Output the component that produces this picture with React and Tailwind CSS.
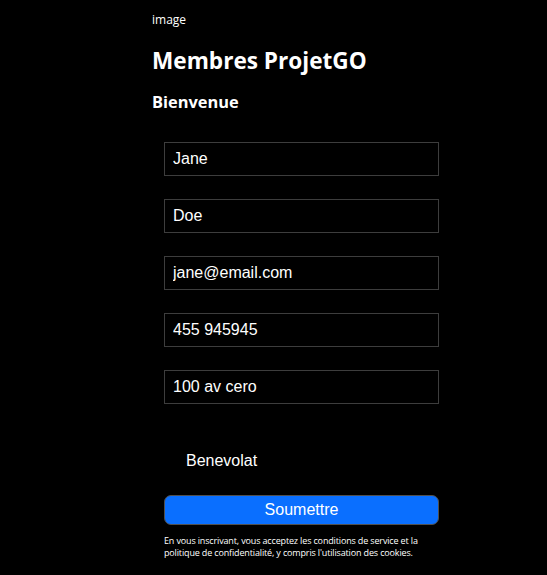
const FIELDS = ["Jane", "Doe", "jane@email.com", "455 945945", "100 av cero"];

export default function App() {
  return (
    <div className="min-h-[575px] bg-black text-white pl-[152px] pt-[12px]">
      <p className="text-[12px] leading-[16px] font-['Open_Sans',sans-serif]">image</p>
      <h1 className="mt-[19px] text-[22.6px] leading-[28px] font-bold font-['Open_Sans',sans-serif]">
        Membres ProjetGO
      </h1>
      <h2 className="mt-[16px] text-[16.4px] leading-[22px] font-bold font-['Open_Sans',sans-serif]">
        Bienvenue
      </h2>

      <form className="ml-[12px] mt-[29px] w-[275px] flex flex-col font-['Liberation_Sans',Arial,sans-serif]">
        <div className="flex flex-col gap-[23px]">
          {FIELDS.map((v) => (
            <input
              key={v}
              defaultValue={v}
              className="h-[34px] w-full bg-black border border-[#3d3d3d] px-[8px] text-[16px] text-white outline-none"
            />
          ))}
        </div>

        <label className="mt-[47px] flex items-center gap-[6px] text-[16px] leading-[20px]">
          <span className="w-[16px] h-[16px]" />
          Benevolat
        </label>

        <button
          type="button"
          className="mt-[24px] h-[30px] w-full rounded-[7px] bg-[#0a6fff] border border-[#505050] text-[16px] text-white"
        >
          Soumettre
        </button>

        <p className="mt-[10px] text-[9px] leading-[11.5px] tracking-[-0.15px] font-['Open_Sans',sans-serif]">
          En vous inscrivant, vous acceptez les conditions de service et la politique de confidentialité, y compris l'utilisation des cookies.
        </p>
      </form>
    </div>
  );
}
